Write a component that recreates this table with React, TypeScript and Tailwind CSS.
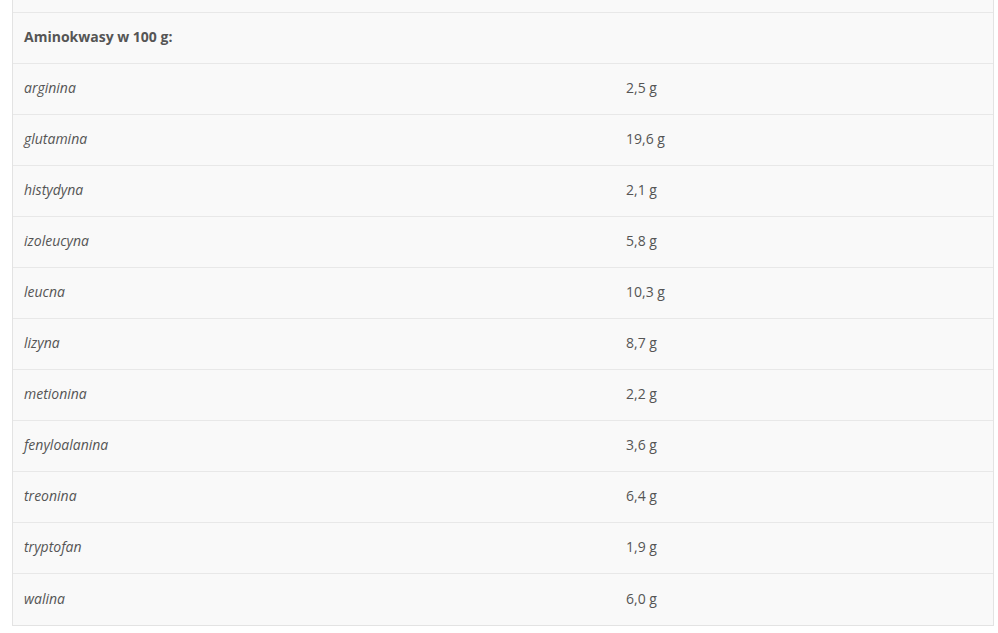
import React from "react";

const rows: [string, string][] = [
  ["arginina", "2,5 g"],
  ["glutamina", "19,6 g"],
  ["histydyna", "2,1 g"],
  ["izoleucyna", "5,8 g"],
  ["leucna", "10,3 g"],
  ["lizyna", "8,7 g"],
  ["metionina", "2,2 g"],
  ["fenyloalanina", "3,6 g"],
  ["treonina", "6,4 g"],
  ["tryptofan", "1,9 g"],
  ["walina", "6,0 g"],
];

export default function App() {
  return (
    <div
      className="min-h-[633px] bg-white pl-[12px]"
      style={{ fontFamily: '"Open Sans", sans-serif' }}
    >
      <div className="w-[982px] border-x border-b border-[#e3e3e3] bg-[#f9f9f9] text-[14px] leading-[20px] text-[#555]">
        <div className="h-[12.6px] border-b border-[#e8e8e8]" />
        <div className="flex h-[51.05px] items-center border-b border-[#e8e8e8] pb-[2px] pl-[11px]">
          <span className="font-bold">Aminokwasy w 100 g:</span>
        </div>
        {rows.map(([name, val], i) => (
          <div
            key={name}
            className={`flex h-[51.05px] items-center pb-[2px] ${i < rows.length - 1 ? "border-b border-[#e8e8e8]" : ""}`}
          >
            <div className="w-[601px] pl-[11px] italic">{name}</div>
            <div className="pl-[12px]">{val}</div>
          </div>
        ))}
      </div>
    </div>
  );
}
